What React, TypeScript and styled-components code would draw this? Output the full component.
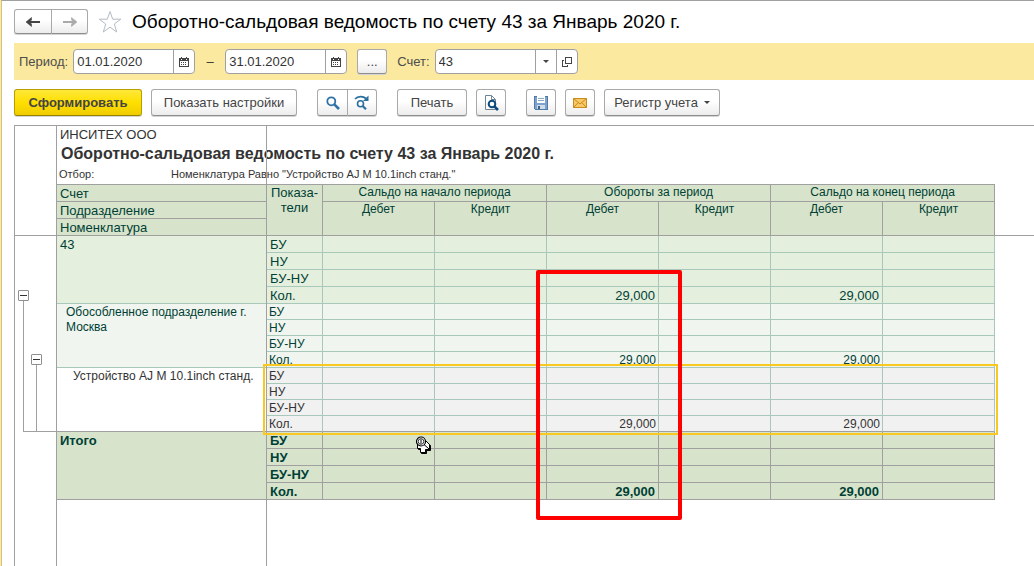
import React from "react";
import styled, { createGlobalStyle, css } from "styled-components";

const line = "#a0a0a0";
const softLine = "#a9c8bc";
const headFill = "#d7e4cb";

const GlobalStyle = createGlobalStyle`
  * { box-sizing: border-box; }
  html, body, #root { height: 100%; }
  body {
    margin: 0;
    border-left: 1px solid #fbe9a0;
    background: #fff;
    color: #333;
    font-family: "Liberation Sans", Arial, sans-serif;
    font-size: 13px;
  }
  button, input { font: inherit; color: inherit; }
`;

const Page = styled.div`
  display: flex;
  flex-direction: column;
  min-height: 100%;
  padding: 8px 0 0 12px;
  border-top: 1px solid #a0a0a0;
  border-left: 1px solid #d3c283;
  overflow: hidden;
`;

const TitleBar = styled.header`
  display: flex;
  align-items: center;
  height: 25px;
  gap: 10px;
`;

const Title = styled.h1`
  margin: 0;
  font-size: 19px;
  font-weight: 400;
  line-height: 24px;
  color: #000;
  white-space: nowrap;
`;

const ButtonGroup = styled.div`
  display: flex;
  & > button:not(:first-child) { border-top-left-radius: 0; border-bottom-left-radius: 0; margin-left: -1px; }
  & > button:not(:last-child) { border-top-right-radius: 0; border-bottom-right-radius: 0; }
`;

const Button = styled.button<{ $width?: number; $primary?: boolean; $low?: boolean }>`
  display: inline-flex;
  align-items: center;
  justify-content: center;
  flex: none;
  height: ${(p) => (p.$low ? 25 : 27)}px;
  width: ${(p) => (p.$width ? p.$width + "px" : "auto")};
  padding: 0;
  border: 1px solid #a9a9a9;
  border-bottom-color: #8e8e8e;
  border-radius: 3px;
  background: linear-gradient(#fff 45%, #ececec);
  box-shadow: 0 1px 0 #d5d5d5;
  color: #444;
  white-space: nowrap;
  ${(p) =>
    p.$primary &&
    css`
      border-color: #b79f00;
      border-bottom-color: #978300;
      background: linear-gradient(#ffe83a, #ffdf00 50%, #efcd00);
      font-weight: 700;
    `}
`;

const StarButton = styled.button`
  display: flex;
  padding: 0;
  border: 0;
  background: none;
`;

const FilterBar = styled.div`
  display: flex;
  align-items: center;
  height: 37px;
  margin-top: 9px;
  padding-left: 5px;
  background: #fbe9a0;
`;

const Label = styled.label`
  margin-right: 5px;
  color: #4d4d4d;
`;

const Dash = styled.span`
  width: 30px;
  text-align: center;
`;

const Field = styled.div`
  display: flex;
  height: 25px;
  border: 1px solid #a0a0a0;
  border-radius: 4px;
  background: #fff;
  overflow: hidden;
`;

const Input = styled.input`
  width: 99px;
  padding: 0 3px;
  border: 0;
  outline: 0;
  background: none;
`;

const FieldButton = styled.button`
  display: flex;
  align-items: center;
  justify-content: center;
  width: 21px;
  padding: 0;
  border: 0;
  border-left: 1px solid #a0a0a0;
  background: none;
`;

const PeriodPicker = styled.div`
  display: flex;
  margin: 0 10px;
`;

const Toolbar = styled.div`
  display: flex;
  align-items: center;
  gap: 9px;
  height: 27px;
  margin-top: 9px;
`;

const Cluster = styled.div`
  display: flex;
  gap: 9px;
  margin-left: 11px;
`;

const MenuText = styled.span`
  margin-right: 6px;
`;

const Sheet = styled.main`
  position: relative;
  display: flex;
  flex: 1;
  margin-top: 9px;
  border-top: 1px solid ${line};
  border-left: 1px solid ${line};
`;

const Gutter = styled.div`
  flex: none;
  width: 42px;
  border-right: 1px solid ${line};
`;

const GutterHead = styled.div`
  height: 110px;
  border-bottom: 1px solid ${line};
`;

const Branch = styled.div<{ $top: number; $left: number }>`
  display: flex;
  flex-direction: column;
  height: 100%;
  padding: ${(p) => p.$top}px 0 0 ${(p) => p.$left}px;
`;

const Tree = styled.div`
  height: 196px;
`;

const Toggle = styled.button`
  display: flex;
  align-items: center;
  justify-content: center;
  flex: none;
  width: 11px;
  height: 11px;
  padding: 0;
  border: 1px solid #8f8f8f;
  border-radius: 1px;
  background: #fff;
  &::before { content: ""; width: 7px; height: 1px; background: #333; }
`;

const Trunk = styled.div<{ $foot?: boolean }>`
  flex: 1;
  min-height: 0;
  margin-left: 5px;
  border-left: 1px solid ${line};
  border-bottom: ${(p) => (p.$foot ? "1px solid " + line : "0")};
`;

const FreezeLine = styled.div`
  position: absolute;
  top: 0;
  bottom: 0;
  left: 251px;
  width: 1px;
  background: ${line};
`;

const Report = styled.div`
  flex: 1;
  min-width: 0;
`;

const Organisation = styled.div`
  height: 17px;
  padding-left: 3px;
  line-height: 17px;
`;

const ReportTitle = styled.h2`
  height: 22px;
  margin: 0;
  padding-left: 4px;
  font-size: 16px;
  line-height: 22px;
  white-space: nowrap;
`;

const Selection = styled.div`
  display: flex;
  height: 19px;
  padding-left: 2px;
  font-size: 11px;
  line-height: 19px;
  white-space: nowrap;
`;

const SelectionName = styled.span`
  width: 112px;
`;

const Table = styled.table`
  width: 100%;
  table-layout: fixed;
  border-collapse: separate;
  border-spacing: 0;
  font-size: 13px;
  line-height: 15px;
  color: #003f35;
`;

const Col = styled.col<{ $width?: number }>`
  width: ${(p) => (p.$width ? p.$width + "px" : "auto")};
`;

const HeadCell = styled.th<{ $left?: boolean; $top?: boolean; $small?: boolean }>`
  height: ${(p) => (p.$top ? 18 : 17)}px;
  padding: ${(p) => (p.$left ? "1px 3px 0" : "0")};
  border: solid ${line};
  border-width: ${(p) => (p.$top ? 1 : 0)}px 1px 1px 0;
  background: ${headFill};
  font-size: ${(p) => (p.$small ? 12 : 13)}px;
  font-weight: 400;
  text-align: ${(p) => (p.$left ? "left" : "center")};
  vertical-align: top;
`;

const HeadFiller = styled.td`
  padding: 0;
  border-bottom: 1px solid ${line};
`;

type Tone = "account" | "division" | "item" | "total";

const tones: Record<
  Tone,
  { fill: string; label: string; grid: string; row: number; size: number; indent: number; pad: number; ink: string }
> = {
  account: { fill: "#e4efdd", label: "#e4efdd", grid: softLine, row: 17, size: 13, indent: 3, pad: 3, ink: "#003f35" },
  division: { fill: "#f0f5ef", label: "#f0f5ef", grid: softLine, row: 16, size: 12, indent: 9, pad: 2, ink: "#003f35" },
  item: { fill: "#f1f1f1", label: "#ffffff", grid: softLine, row: 16, size: 12, indent: 16, pad: 2, ink: "#333333" },
  total: { fill: headFill, label: headFill, grid: line, row: 17, size: 13, indent: 3, pad: 3, ink: "#003f35" },
};

const Group = styled.tbody<{ $tone: Tone }>`
  color: ${(p) => tones[p.$tone].ink};
  font-size: ${(p) => tones[p.$tone].size}px;
  font-weight: ${(p) => (p.$tone === "total" ? 700 : 400)};
`;

const cell = css<{ $tone: Tone; $last?: boolean }>`
  padding: 1px ${(p) => tones[p.$tone].pad}px 0;
  height: ${(p) => tones[p.$tone].row}px;
  border-right: 1px solid ${(p) => tones[p.$tone].grid};
  border-bottom: 1px solid ${(p) => (p.$last && p.$tone === "item" ? line : tones[p.$tone].grid)};
  background: ${(p) => tones[p.$tone].fill};
  line-height: ${(p) => tones[p.$tone].row - 2}px;
  vertical-align: top;
`;

const NameCell = styled.th<{ $tone: Tone; $last?: boolean }>`
  ${cell}
  padding-left: ${(p) => tones[p.$tone].indent}px;
  background: ${(p) => tones[p.$tone].label};
  font-weight: inherit;
  line-height: 15px;
  text-align: left;
`;

const Measure = styled.th<{ $tone: Tone; $last?: boolean }>`
  ${cell}
  font-weight: inherit;
  text-align: left;
`;

const Value = styled.td<{ $tone: Tone; $last?: boolean }>`
  ${cell}
  text-align: right;
`;

const CellFrame = styled.div`
  position: absolute;
  top: 238px;
  left: 248px;
  width: 735px;
  height: 71px;
  border: 2px solid #f9c922;
`;

const Marker = styled.div`
  position: absolute;
  top: 144px;
  left: 521px;
  width: 146px;
  height: 250px;
  border: 4px solid #f00;
  border-radius: 2px;
`;

const Cursor = styled.svg`
  position: absolute;
  top: 310px;
  left: 400px;
`;

const Arrow = ({ flip, color }: { flip?: boolean; color: string }) => (
  <svg width="16" height="12" viewBox="0 0 16 12">
    <g transform={flip ? "matrix(-1 0 0 1 16 0)" : undefined}>
      <path d="M3 6H15" stroke={color} strokeWidth="2" />
      <path d="M1 6L6.500 1.500V4L4.500 6L6.500 8V10.500Z" fill={color} stroke={color} strokeWidth=".6" />
    </g>
  </svg>
);

const Star = () => (
  <svg width="24" height="24" viewBox="0 0 24 24">
    <path d="M12 1.500L14.700 9.200H22.800L16.300 14L18.700 22L12 17.200L5.300 22L7.700 14L1.200 9.200H9.300Z" fill="#fff" stroke="#b4bcc4" />
  </svg>
);

const Calendar = () => (
  <svg width="10" height="10" viewBox="0 0 10 10" shapeRendering="crispEdges">
    <path d="M0 1h10v9H0z" fill="#444" />
    <path d="M2 0h1v1H2zM7 0h1v1H7z" fill="#444" />
    <path d="M1 4h8v5H1z" fill="#fff" />
    <path d="M2 2h1v1H2zM7 2h1v1H7z" fill="#fff" />
    <path d="M2 5.500h6M2 7.500h6" stroke="#444" strokeDasharray="1 1" />
  </svg>
);

const Caret = () => (
  <svg width="6" height="3" viewBox="0 0 6 3"><path d="M0 0H6L3 3Z" fill="#444" /></svg>
);

const OpenIcon = () => (
  <svg width="10" height="10" viewBox="0 0 10 10" fill="none" stroke="#444" shapeRendering="crispEdges">
    <path d="M3.500 .5h6v6h-6zM2 3.500H.5v6h5V8" />
  </svg>
);

const Magnifier = () => (
  <svg width="16" height="16" viewBox="0 0 16 16" fill="none" stroke="#2f72a8">
    <circle cx="6.300" cy="6.300" r="4" strokeWidth="1.800" />
    <path d="M9.300 9.300L14 14" strokeWidth="2.600" />
  </svg>
);

const MagnifierNext = () => (
  <svg width="16" height="16" viewBox="0 0 16 16" fill="none" stroke="#2b6f9f">
    <path d="M1 4C4 .8 9 .8 12 3.500" strokeWidth="1.800" />
    <path d="M14.500 .5V6H9Z" fill="#2b6f9f" stroke="none" />
    <circle cx="6.500" cy="8.800" r="3" strokeWidth="1.600" />
    <path d="M8.700 11L12 14.300" strokeWidth="2.200" />
  </svg>
);

const Preview = () => (
  <svg width="16" height="16" viewBox="0 0 16 16" fill="none">
    <path d="M2.500 .5h6l4 4v10h-10z" fill="#fff" stroke="#6f8496" />
    <path d="M8.500 .5v4h4" stroke="#6f8496" />
    <circle cx="9" cy="9" r="3.300" stroke="#0b4a7a" strokeWidth="2" fill="#fff" />
    <path d="M11.300 11.300L15 15" stroke="#0b4a7a" strokeWidth="2.600" />
  </svg>
);

const Floppy = () => (
  <svg width="16" height="16" viewBox="0 0 16 16" shapeRendering="crispEdges">
    <path d="M1.500 1.500h13v13h-12l-1-1z" fill="#7ba3cd" stroke="#4f7ba8" />
    <path d="M4 1h8v7H4z" fill="#fff" />
    <path d="M5 3.500h6M5 5.500h6" stroke="#8fa9c0" />
    <path d="M4 10h8v4H4z" fill="#cfdde9" />
    <path d="M5 11h2v3H5z" fill="#3d5f80" />
  </svg>
);

const Envelope = () => (
  <svg width="14" height="10" viewBox="0 0 14 10">
    <path d="M.5 .5h13v9H.5z" fill="#f8c867" stroke="#c98a1e" />
    <path d="M.5 .5L7 6L13.500 .5M.5 9.500L5 4.800M13.500 9.500L9 4.800" fill="none" stroke="#c98a1e" />
  </svg>
);

const groups: { tone: Tone; name: string }[] = [
  { tone: "account", name: "43" },
  { tone: "division", name: "Обособленное подразделение г. Москва" },
  { tone: "item", name: "Устройство AJ M 10.1inch станд." },
  { tone: "total", name: "Итого" },
];
const measures = ["БУ", "НУ", "БУ-НУ", "Кол."];
const quantity = ["", "", "29,000", "", "29,000", ""];

export default function App() {
  return (
    <Page>
      <GlobalStyle />
      <TitleBar>
        <ButtonGroup>
          <Button $width={38} $low aria-label="Назад"><Arrow color="#444" /></Button>
          <Button $width={37} $low aria-label="Вперед"><Arrow flip color="#aaa" /></Button>
        </ButtonGroup>
        <StarButton aria-label="Избранное"><Star /></StarButton>
        <Title>Оборотно-сальдовая ведомость по счету 43 за Январь 2020 г.</Title>
      </TitleBar>

      <FilterBar>
        <Label htmlFor="from">Период:</Label>
        <Field>
          <Input id="from" defaultValue="01.01.2020" />
          <FieldButton aria-label="Выбрать начало"><Calendar /></FieldButton>
        </Field>
        <Dash>–</Dash>
        <Field>
          <Input aria-label="Конец периода" defaultValue="31.01.2020" />
          <FieldButton aria-label="Выбрать конец"><Calendar /></FieldButton>
        </Field>
        <PeriodPicker>
          <Button $width={30} $low>...</Button>
        </PeriodPicker>
        <Label htmlFor="account">Счет:</Label>
        <Field>
          <Input id="account" defaultValue="43" />
          <FieldButton aria-label="Список"><Caret /></FieldButton>
          <FieldButton aria-label="Открыть"><OpenIcon /></FieldButton>
        </Field>
      </FilterBar>

      <Toolbar>
        <Button $primary $width={128}>Сформировать</Button>
        <Button $width={146}>Показать настройки</Button>
        <Cluster>
          <ButtonGroup>
            <Button $width={31} aria-label="Найти"><Magnifier /></Button>
            <Button $width={30} aria-label="Найти далее"><MagnifierNext /></Button>
          </ButtonGroup>
        </Cluster>
        <Cluster>
          <Button $width={70}>Печать</Button>
          <Button $width={30} aria-label="Просмотр"><Preview /></Button>
        </Cluster>
        <Cluster>
          <Button $width={30} aria-label="Сохранить"><Floppy /></Button>
          <Button $width={30} aria-label="Отправить"><Envelope /></Button>
          <Button $width={116}><MenuText>Регистр учета</MenuText><Caret /></Button>
        </Cluster>
      </Toolbar>

      <Sheet>
        <Gutter>
          <GutterHead />
          <Tree>
            <Branch $top={54} $left={3}>
              <Toggle aria-label="Свернуть счет" />
              <Trunk $foot>
                <Branch $top={53} $left={7}>
                  <Toggle aria-label="Свернуть подразделение" />
                  <Trunk />
                </Branch>
              </Trunk>
            </Branch>
          </Tree>
        </Gutter>
        <Report>
          <Organisation>ИНСИТЕХ ООО</Organisation>
          <ReportTitle>Оборотно-сальдовая ведомость по счету 43 за Январь 2020 г.</ReportTitle>
          <Selection>
            <SelectionName>Отбор:</SelectionName>
            <span>Номенклатура Равно "Устройство AJ M 10.1inch станд."</span>
          </Selection>
          <Table>
            <colgroup>
              <Col $width={210} />
              <Col $width={56} />
              {quantity.map((_, i) => <Col key={i} $width={112} />)}
              <Col />
            </colgroup>
            <thead>
              <tr>
                <HeadCell $left $top>Счет</HeadCell>
                <HeadCell $top rowSpan={3}>Показа-<br />тели</HeadCell>
                <HeadCell $top $small colSpan={2}>Сальдо на начало периода</HeadCell>
                <HeadCell $top $small colSpan={2}>Обороты за период</HeadCell>
                <HeadCell $top $small colSpan={2}>Сальдо на конец периода</HeadCell>
                <HeadFiller rowSpan={3} />
              </tr>
              <tr>
                <HeadCell $left>Подразделение</HeadCell>
                {quantity.map((_, i) => (
                  <HeadCell key={i} $small rowSpan={2}>{i % 2 ? "Кредит" : "Дебет"}</HeadCell>
                ))}
              </tr>
              <tr>
                <HeadCell $left>Номенклатура</HeadCell>
              </tr>
            </thead>
            {groups.map((g) => (
              <Group key={g.tone} $tone={g.tone}>
                {measures.map((m, r) => (
                  <tr key={m}>
                    {r === 0 && <NameCell $tone={g.tone} $last rowSpan={4}>{g.name}</NameCell>}
                    <Measure $tone={g.tone} $last={r === 3}>{m}</Measure>
                    {quantity.map((q, i) => (
                      <Value key={i} $tone={g.tone} $last={r === 3}>{r === 3 ? q : ""}</Value>
                    ))}
                  </tr>
                ))}
              </Group>
            ))}
          </Table>
        </Report>
        <FreezeLine />
        <CellFrame />
        <Marker />
        <Cursor width="18" height="20" viewBox="0 0 18 20">
          <path d="M3.500 9V13.500H6.500V17.500H11.500V14.500H15.500V9.500L11 5Z" fill="#000" stroke="#000" />
          <path d="M2.500 8V12.500H5.500V16.500H10.500V13.500H14.500V8.500L10 4Z" fill="#fff" stroke="#000" />
          <circle cx="6" cy="5.500" r="4.500" fill="#fff" stroke="#000" strokeWidth="1.200" />
          <circle cx="6" cy="5.500" r="2.800" fill="none" stroke="#000" strokeWidth=".8" />
          <path d="M6 3.500V7.500M9 8.500L14 13" stroke="#000" />
        </Cursor>
      </Sheet>
    </Page>
  );
}
